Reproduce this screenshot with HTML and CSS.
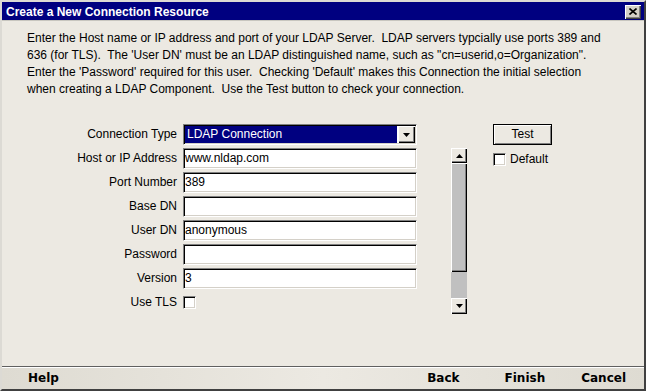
FILE: index.html
```html
<!DOCTYPE html>
<html>
    <head>
        <title>Create a New Connection Resource</title>
        <meta charset="UTF-8">
        <link rel="stylesheet" href="styles.css">
    </head>
    <body>
        <div class="window">
            <div class="titlebar">
                <span class="title">Create a New Connection Resource</span>
                <span class="close">
                    <svg width="8" height="7" viewBox="0 0 8 7"><path d="M0.5 0.5 L7.5 6.5 M7.5 0.5 L0.5 6.5" stroke="#000" stroke-width="1.6"/></svg>
                </span>
            </div>
            <div class="content">
                <p class="intro">Enter the Host name or IP address and port of your LDAP Server.&nbsp; LDAP servers typcially use ports 389 and<br>
                636 (for TLS).&nbsp; The 'User DN' must be an LDAP distinguished name, such as "cn=userid,o=Organization".<br>
                Enter the 'Password' required for this user.&nbsp; Checking 'Default' makes this Connection the initial selection<br>
                when creating a LDAP Component.&nbsp; Use the Test button to check your connection.</p>

                <div class="main">
                    <div class="form">
                        <label class="lbl">Connection Type</label>
                        <div class="combo sunken">
                            <span class="combo-value">LDAP Connection</span>
                            <span class="combo-btn raised">
                                <svg width="7" height="4" viewBox="0 0 7 4"><polygon points="0,0 7,0 3.5,4" fill="#000"/></svg>
                            </span>
                        </div>

                        <label class="lbl">Host or IP Address</label>
                        <div class="field sunken">www.nldap.com</div>

                        <label class="lbl">Port Number</label>
                        <div class="field sunken">389</div>

                        <label class="lbl">Base DN</label>
                        <div class="field sunken"></div>

                        <label class="lbl">User DN</label>
                        <div class="field sunken">anonymous</div>

                        <label class="lbl">Password</label>
                        <div class="field sunken"></div>

                        <label class="lbl">Version</label>
                        <div class="field sunken">3</div>

                        <label class="lbl">Use TLS</label>
                        <div class="check-cell"><span class="check sunken"></span></div>
                    </div>

                    <div class="scrollbar">
                        <div class="sb-btn raised">
                            <svg width="7" height="4" viewBox="0 0 7 4"><polygon points="0,4 7,4 3.5,0" fill="#000"/></svg>
                        </div>
                        <div class="sb-thumb raised"></div>
                        <div class="sb-track"></div>
                        <div class="sb-btn sb-down raised">
                            <svg width="7" height="4" viewBox="0 0 7 4"><polygon points="0,0 7,0 3.5,4" fill="#000"/></svg>
                        </div>
                    </div>

                    <div class="side">
                        <div class="btn-test">Test</div>
                        <div class="default-row">
                            <span class="check sunken"></span>
                            <span class="default-lbl">Default</span>
                        </div>
                    </div>
                </div>
            </div>
            <div class="footer">
                <span class="nav">Help</span>
                <span class="nav nav-back">Back</span>
                <span class="nav nav-finish">Finish</span>
                <span class="nav nav-cancel">Cancel</span>
            </div>
        </div>
    </body>
</html>
```

FILE: styles.css
```css
body{
    margin: 0;
    background: #ece9e2;
    font-family: "Liberation Sans", Arial, sans-serif;
    font-size: 12px;
    color: #000;
}
.window{
    width: 646px;
    height: 391px;
    box-sizing: border-box;
    display: flex;
    flex-direction: column;
    background: #ece9e2;
    border-top: 2px solid #dcdad4;
    border-left: 2px solid #dcdad4;
    border-right: 2px solid #404040;
    border-bottom: 2px solid #404040;
}

/* title bar */
.titlebar{
    height: 19px;
    background: #000080;
    display: flex;
    align-items: center;
    justify-content: space-between;
    padding: 1px 3px 0 4px;
    border-bottom: 1px solid #c8c6bf;
    box-sizing: border-box;
}
.title{
    color: #fff;
    font-weight: bold;
    font-size: 12px;
}
.close{
    width: 16px;
    height: 14px;
    box-sizing: border-box;
    background: #d4d0c8;
    display: flex;
    align-items: center;
    justify-content: center;
    box-shadow: inset 1px 1px 0 #fff, inset -1px -1px 0 #404040, inset -2px -2px 0 #808080;
}

.content{
    flex: 1;
}
.intro{
    margin: 0;
    padding: 9px 0 0 25px;
    line-height: 17px;
}

.main{
    display: flex;
    align-items: flex-start;
    margin-top: 26px;
}

/* form grid */
.form{
    display: grid;
    grid-template-columns: 156px 234px;
    grid-auto-rows: 21px;
    column-gap: 6px;
    row-gap: 3px;
    margin-left: 19px;
}
.lbl{
    text-align: right;
    line-height: 21px;
}
.sunken{
    box-sizing: border-box;
    border-top: 1px solid #808080;
    border-left: 1px solid #808080;
    border-right: 1px solid #fff;
    border-bottom: 1px solid #fff;
    box-shadow: inset 1px 1px 0 #000, inset -1px -1px 0 #d4d0c8;
}
.raised{
    box-sizing: border-box;
    background: #ece9e2;
    box-shadow: inset 1px 1px 0 #fff, inset -1px -1px 0 #000, inset -2px -2px 0 #808080;
}
.field{
    background: #fff;
    padding-left: 1px;
    line-height: 19px;
    white-space: nowrap;
}
.combo{
    background: #fff;
    display: flex;
    align-items: stretch;
    padding: 1px;
}
.combo-value{
    flex: 1;
    background: #000080;
    color: #fff;
    padding-left: 2px;
    line-height: 17px;
    margin-right: 1px;
}
.combo-btn{
    width: 17px;
    display: flex;
    align-items: center;
    justify-content: center;
}
.check-cell{
    display: flex;
    align-items: center;
}
.check{
    display: block;
    width: 13px;
    height: 13px;
    background: #fff;
}

/* scrollbar */
.scrollbar{
    width: 16px;
    margin-left: 34px;
    margin-top: 24px;
    display: flex;
    flex-direction: column;
}
.sb-btn{
    height: 15px;
    display: flex;
    align-items: center;
    justify-content: center;
}
.sb-down{
    height: 16px;
}
.sb-thumb{
    height: 109px;
    background: #c0c0c0;
}
.sb-track{
    height: 26px;
    background: #c0c0c0;
}

/* right side */
.side{
    margin-left: 26px;
}
.btn-test{
    width: 59px;
    height: 21px;
    box-sizing: border-box;
    border: 1px solid #000;
    background: #ece9e2;
    box-shadow: inset 1px 1px 0 #fff, inset -1px -1px 0 #808080;
    text-align: center;
    line-height: 19px;
}
.default-row{
    display: flex;
    align-items: center;
    margin-top: 7px;
}
.default-lbl{
    margin-left: 4px;
}

/* footer */
.footer{
    height: 23px;
    box-sizing: border-box;
    border-top: 1px solid #606060;
    box-shadow: inset 0 1px 0 #fff;
    background: linear-gradient(to right, #dedbd2, #ece9e2 50%, #dedbd2);
    display: flex;
    align-items: center;
    padding: 0 18px 0 26px;
}
.nav{
    font-family: "DejaVu Sans", Verdana, sans-serif;
    font-weight: bold;
    font-size: 12px;
}
.nav-back{
    margin-left: auto;
}
.nav-finish{
    margin-left: 45px;
}
.nav-cancel{
    margin-left: 36px;
}
```
